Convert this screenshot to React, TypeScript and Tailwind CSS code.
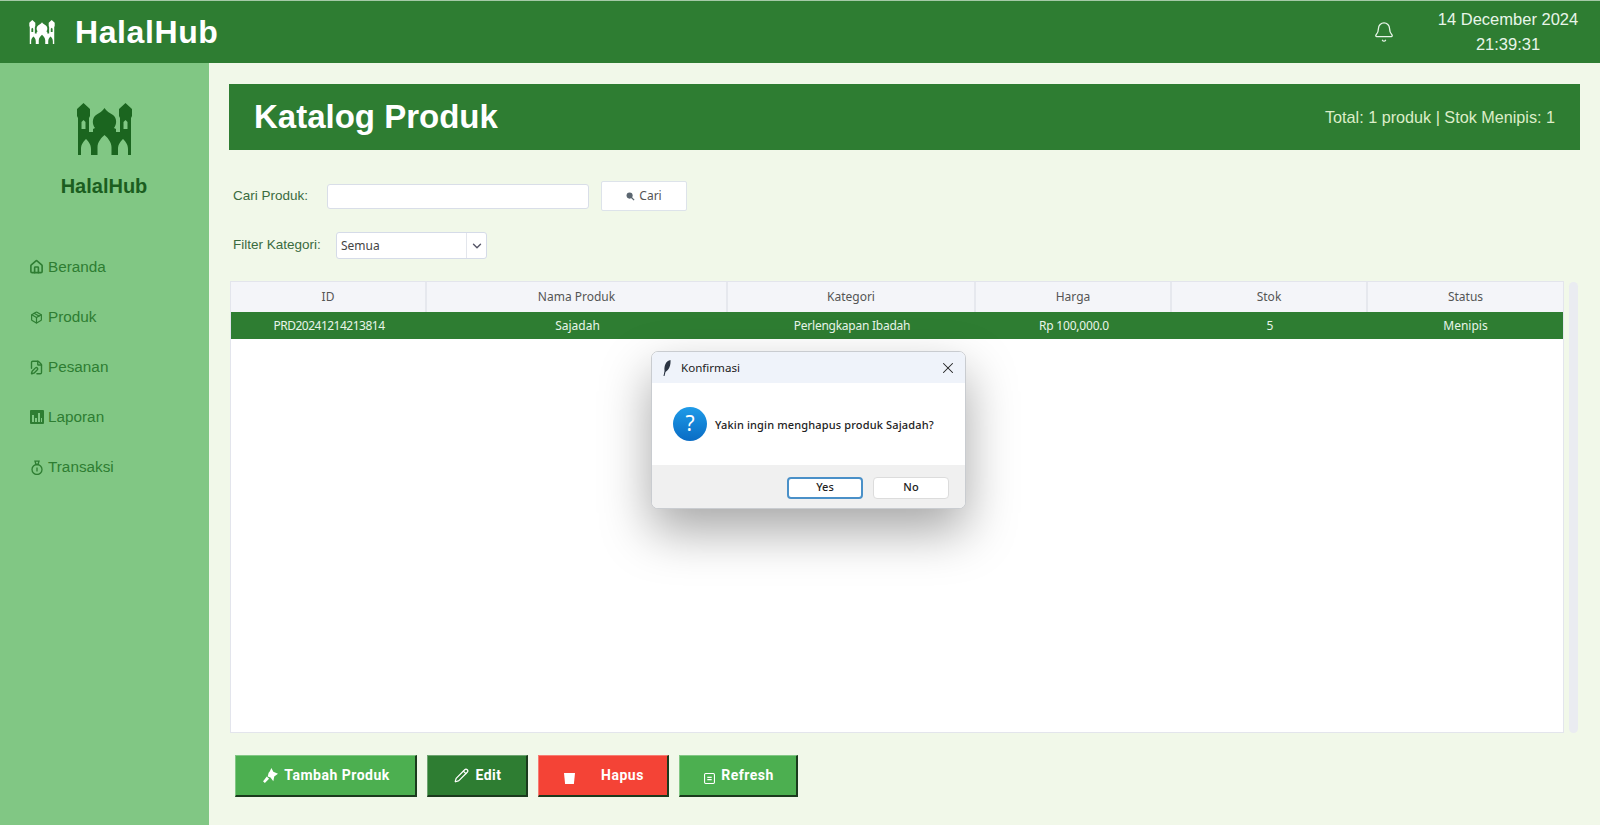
import { Bell, ChevronDown, FilePen, House, Package, Pencil, X } from 'lucide-react';
import type { ReactNode } from 'react';

function Mosque({ className }: { className: string }) {
  return (
    <svg viewBox="0 0 55 52" className={className} fill="currentColor">
      <path
        fillRule="evenodd"
        d="M6.5 0L13 6V13L12 15V29H16V26L18 25C15 21 15 15 19 12C22 10 26 8 27.5 5C29 8 33 10 36 12C40 15 40 21 37 25L39 26V29H43V15L42 13V6L48.5 0L55 6V13L54 15V52H51V46C51 41 48 38 46 36C44 38 41 41 41 46V52H34.5V44C34.5 39 30 34 27.5 32C25 34 20.5 39 20.5 44V52H14V46C14 41 11 38 9 36C7 38 4 41 4 46V52H1V15L0 13V6ZM4.5 19V26H8.5V19L6.5 17ZM46.5 19V26H50.5V19L48.5 17Z"
      />
    </svg>
  );
}

function NavItem({ icon, label }: { icon: ReactNode; label: string }) {
  return (
    <div className="flex h-[50px] items-center gap-[4px] pl-[29px] text-[15.3px] text-[#2e7d32]">
      <span className="flex w-[15px] justify-center">{icon}</span>
      {label}
    </div>
  );
}

function ActionButton({ className, children }: { className: string; children: ReactNode }) {
  return (
    <button
      className={`flex h-[42px] items-center justify-center border-t border-l border-white/30 border-r-2 border-b-2 border-r-[#1b3a1d] border-b-[#1b3a1d] pl-[2px] font-['Roboto',sans-serif] text-[14px] font-bold tracking-[0.5px] text-white ${className}`}
    >
      {children}
    </button>
  );
}

const columns = [
  { title: 'ID', value: 'PRD20241214213814', width: 'w-[196px]', valueClass: 'tracking-[-0.5px]' },
  { title: 'Nama Produk', value: 'Sajadah', width: 'w-[301px]', valueClass: '' },
  { title: 'Kategori', value: 'Perlengkapan Ibadah', width: 'w-[248px]', valueClass: 'tracking-[-0.25px]' },
  { title: 'Harga', value: 'Rp 100,000.0', width: 'w-[196px]', valueClass: 'tracking-[-0.2px]' },
  { title: 'Stok', value: '5', width: 'w-[196px]', valueClass: '' },
  { title: 'Status', value: 'Menipis', width: 'w-[195px]', valueClass: '' },
];

export default function App() {
  return (
    <div className="relative flex h-[825px] w-[1600px] flex-col overflow-hidden bg-[#f1f8e9] font-['Liberation_Sans',sans-serif]">
      {/* Top bar */}
      <header className="flex h-[63px] shrink-0 items-center justify-between border-t border-[#a5c9a7] bg-[#2e7d32] text-white">
        <div className="flex items-center">
          <Mosque className="ml-[29px] h-[24px] w-[26px]" />
          <span className="ml-[20px] text-[32px] font-bold tracking-[0.6px]">HalalHub</span>
        </div>
        <div className="flex items-center">
          <Bell className="h-[22px] w-[22px] text-[#e8f5e9]" strokeWidth={1.4} />
          <div className="ml-[40px] mr-[19px] w-[146px] whitespace-nowrap text-center text-[16.5px] leading-[25px] text-[#e8f5e9]">
            <div>14 December 2024</div>
            <div>21:39:31</div>
          </div>
        </div>
      </header>

      <div className="flex min-h-0 flex-1">
        {/* Sidebar */}
        <aside className="w-[209px] shrink-0 bg-[#81c784]">
          <div className="flex flex-col items-center pr-[1px] pt-[40px]">
            <Mosque className="h-[52px] w-[55px] text-[#1b651f]" />
            <div className="mt-[16px] text-[20px] font-bold text-[#1b5e20]">HalalHub</div>
          </div>
          <nav className="mt-[41px]">
            <NavItem icon={<House className="h-[16px] w-[16px]" strokeWidth={2.6} />} label="Beranda" />
            <NavItem icon={<Package className="h-[13px] w-[13px]" strokeWidth={2.2} />} label="Produk" />
            <NavItem icon={<FilePen className="h-[15px] w-[15px]" strokeWidth={2.2} />} label="Pesanan" />
            <NavItem
              icon={
                <svg viewBox="0 0 14 14" className="h-[14px] w-[14px]" fill="currentColor">
                  <path fillRule="evenodd" d="M1 0h12a1 1 0 011 1v12a1 1 0 01-1 1H1a1 1 0 01-1-1V1a1 1 0 011-1zm1 5v7h2V5zm3 3v4h2V8zm3-5v9h2V3zm3 5v4h1V8z" />
                </svg>
              }
              label="Laporan"
            />
            <NavItem
              icon={
                <svg viewBox="0 0 14 15" className="h-[15px] w-[14px]" fill="none" stroke="currentColor" strokeWidth="1.3">
                  <circle cx="7" cy="9.5" r="5" />
                  <path d="M5 1.2h4L8 4.5H6zM7 7.5v4" />
                </svg>
              }
              label="Transaksi"
            />
          </nav>
        </aside>

        {/* Main */}
        <main className="flex min-w-0 flex-1 flex-col pl-[20px] pr-[20px] pt-[21px]">
          <div className="flex h-[66px] shrink-0 items-center justify-between bg-[#2e7d32] pl-[25px] pr-[25px]">
            <h1 className="text-[33px] font-bold text-white">Katalog Produk</h1>
            <span className="text-[16.2px] text-[#dcedc8]">Total: 1 produk | Stok Menipis: 1</span>
          </div>

          <div className="mt-[31px] flex h-[30px] items-center pl-[4px]">
            <span className="w-[94px] text-[13.5px] text-[#3a6b3e]">Cari Produk:</span>
            <input className="h-[25px] w-[262px] rounded-[3px] border border-[#d9dee8] bg-white" />
            <button className="ml-[12px] flex h-[30px] w-[86px] items-center justify-center gap-[4px] rounded-[2px] border border-[#dde3ea] bg-white font-['Noto_Sans',sans-serif] text-[12px] text-[#555]">
              <svg viewBox="0 0 10 10" className="h-[9px] w-[9px]" fill="#5b6670">
                <circle cx="4" cy="4" r="3.4" />
                <path d="M6 5l3.5 3.5-1 1L5 6z" />
              </svg>
              Cari
            </button>
          </div>

          <div className="mt-[21px] flex h-[27px] items-center pl-[4px]">
            <span className="w-[103px] text-[13.5px] text-[#3a6b3e]">Filter Kategori:</span>
            <div className="flex h-[27px] w-[151px] items-center rounded-[3px] border border-[#d5dbe8] bg-white font-['Noto_Sans',sans-serif] text-[12px] text-[#444]">
              <span className="flex-1 pl-[4px]">Semua</span>
              <span className="flex h-full w-[20px] items-center justify-center border-l border-[#e3e6ec]">
                <ChevronDown className="h-[14px] w-[14px] text-[#556]" strokeWidth={2.4} />
              </span>
            </div>
          </div>

          <div className="ml-[1px] mt-[22px] flex h-[452px] shrink-0 gap-[5px]">
            {/* Table */}
            <div className="w-[1334px] border border-[#e3e5ec] bg-white font-['Noto_Sans',sans-serif] text-[12px]">
              <div className="flex h-[30px] bg-[#f4f5f9] text-[#555]">
                {columns.map((c) => (
                  <div key={c.title} className={`flex items-center justify-center border-r-2 border-[#e6e8ee] last:border-r-0 ${c.width}`}>
                    {c.title}
                  </div>
                ))}
              </div>
              <div className="flex h-[27px] bg-[#2e7d32] text-[#e8f5e9]">
                {columns.map((c) => (
                  <div key={c.title} className={`flex items-center justify-center ${c.width} ${c.valueClass}`}>
                    {c.value}
                  </div>
                ))}
              </div>
            </div>
            <div className="mt-[1px] w-[9px] rounded-[5px] bg-[#eaecf1]" />
          </div>

          <div className="mt-[22px] flex gap-[10px] pl-[6px]">
            <ActionButton className="w-[182px] gap-[6px] bg-[#4caf50]">
              <svg viewBox="0 0 16 16" className="h-[15px] w-[15px]" fill="currentColor">
                <path d="M9 0l2 4 5 2-4 3-1 5-3-4-3-1 1-4 1-1zM4 9l2.500 2.500L3 15l-1 1-2-2 1-1z" />
              </svg>
              Tambah Produk
            </ActionButton>
            <ActionButton className="w-[101px] gap-[6px] bg-[#2e7d32]">
              <Pencil className="h-[15px] w-[15px]" strokeWidth={2} />
              Edit
            </ActionButton>
            <ActionButton className="w-[131px] bg-[#f44336]">
              <svg viewBox="0 0 10 10" className="mr-[26px] mt-[6px] h-[11px] w-[11px]" fill="currentColor">
                <path d="M0 0h10L9 10H1z" />
              </svg>
              Hapus
            </ActionButton>
            <ActionButton className="w-[119px] gap-[6px] bg-[#4caf50]">
              <svg viewBox="0 0 10 10" className="mt-[5px] h-[11px] w-[11px]" fill="none" stroke="currentColor">
                <rect x="0.5" y="0.5" width="9" height="9" rx="1" />
                <path d="M3 4h4M3 6h4" />
              </svg>
              Refresh
            </ActionButton>
          </div>
        </main>
      </div>

      {/* Confirm dialog */}
      <div className="absolute left-[651px] top-[351px] w-[315px] overflow-hidden rounded-[7px] border border-[#c9ccd0] bg-white font-['Noto_Sans',sans-serif] text-[12px] text-[#222] shadow-[0_22px_50px_rgba(0,0,0,0.35)]">
        <div className="flex h-[31px] items-center bg-[#eff3fa] pl-[11px] pr-[8px]">
          <svg viewBox="0 0 8 16" className="h-[16px] w-[8px]" fill="#2b3442">
            <path d="M7.500 0C3 1 1 5 1.500 11L0.500 16H1.500L2.500 12C6 10 8 5 7.500 0Z" />
          </svg>
          <span className="ml-[10px] flex-1 text-[11.6px]">Konfirmasi</span>
          <X className="h-[18px] w-[18px] text-[#222]" strokeWidth={1.4} />
        </div>
        <div className="flex h-[82px] items-center gap-[8px] pl-[21px]">
          <div className="flex h-[34px] w-[34px] items-center justify-center rounded-full bg-gradient-to-b from-[#1f9be8] to-[#0a6cc4] text-[21px] text-white">
            ?
          </div>
          <span className="pt-[2px] text-[11px] font-medium tracking-[0.15px]">Yakin ingin menghapus produk Sajadah?</span>
        </div>
        <div className="flex h-[43px] items-center justify-end gap-[10px] bg-[#f0f0f0] pr-[16px] pt-[2px] text-[11px] font-medium">
          <button className="h-[22px] w-[76px] rounded-[4px] border-2 border-[#4a90c8] bg-white">Yes</button>
          <button className="h-[22px] w-[76px] rounded-[4px] border border-[#dcdcdc] bg-white">No</button>
        </div>
      </div>
    </div>
  );
}
